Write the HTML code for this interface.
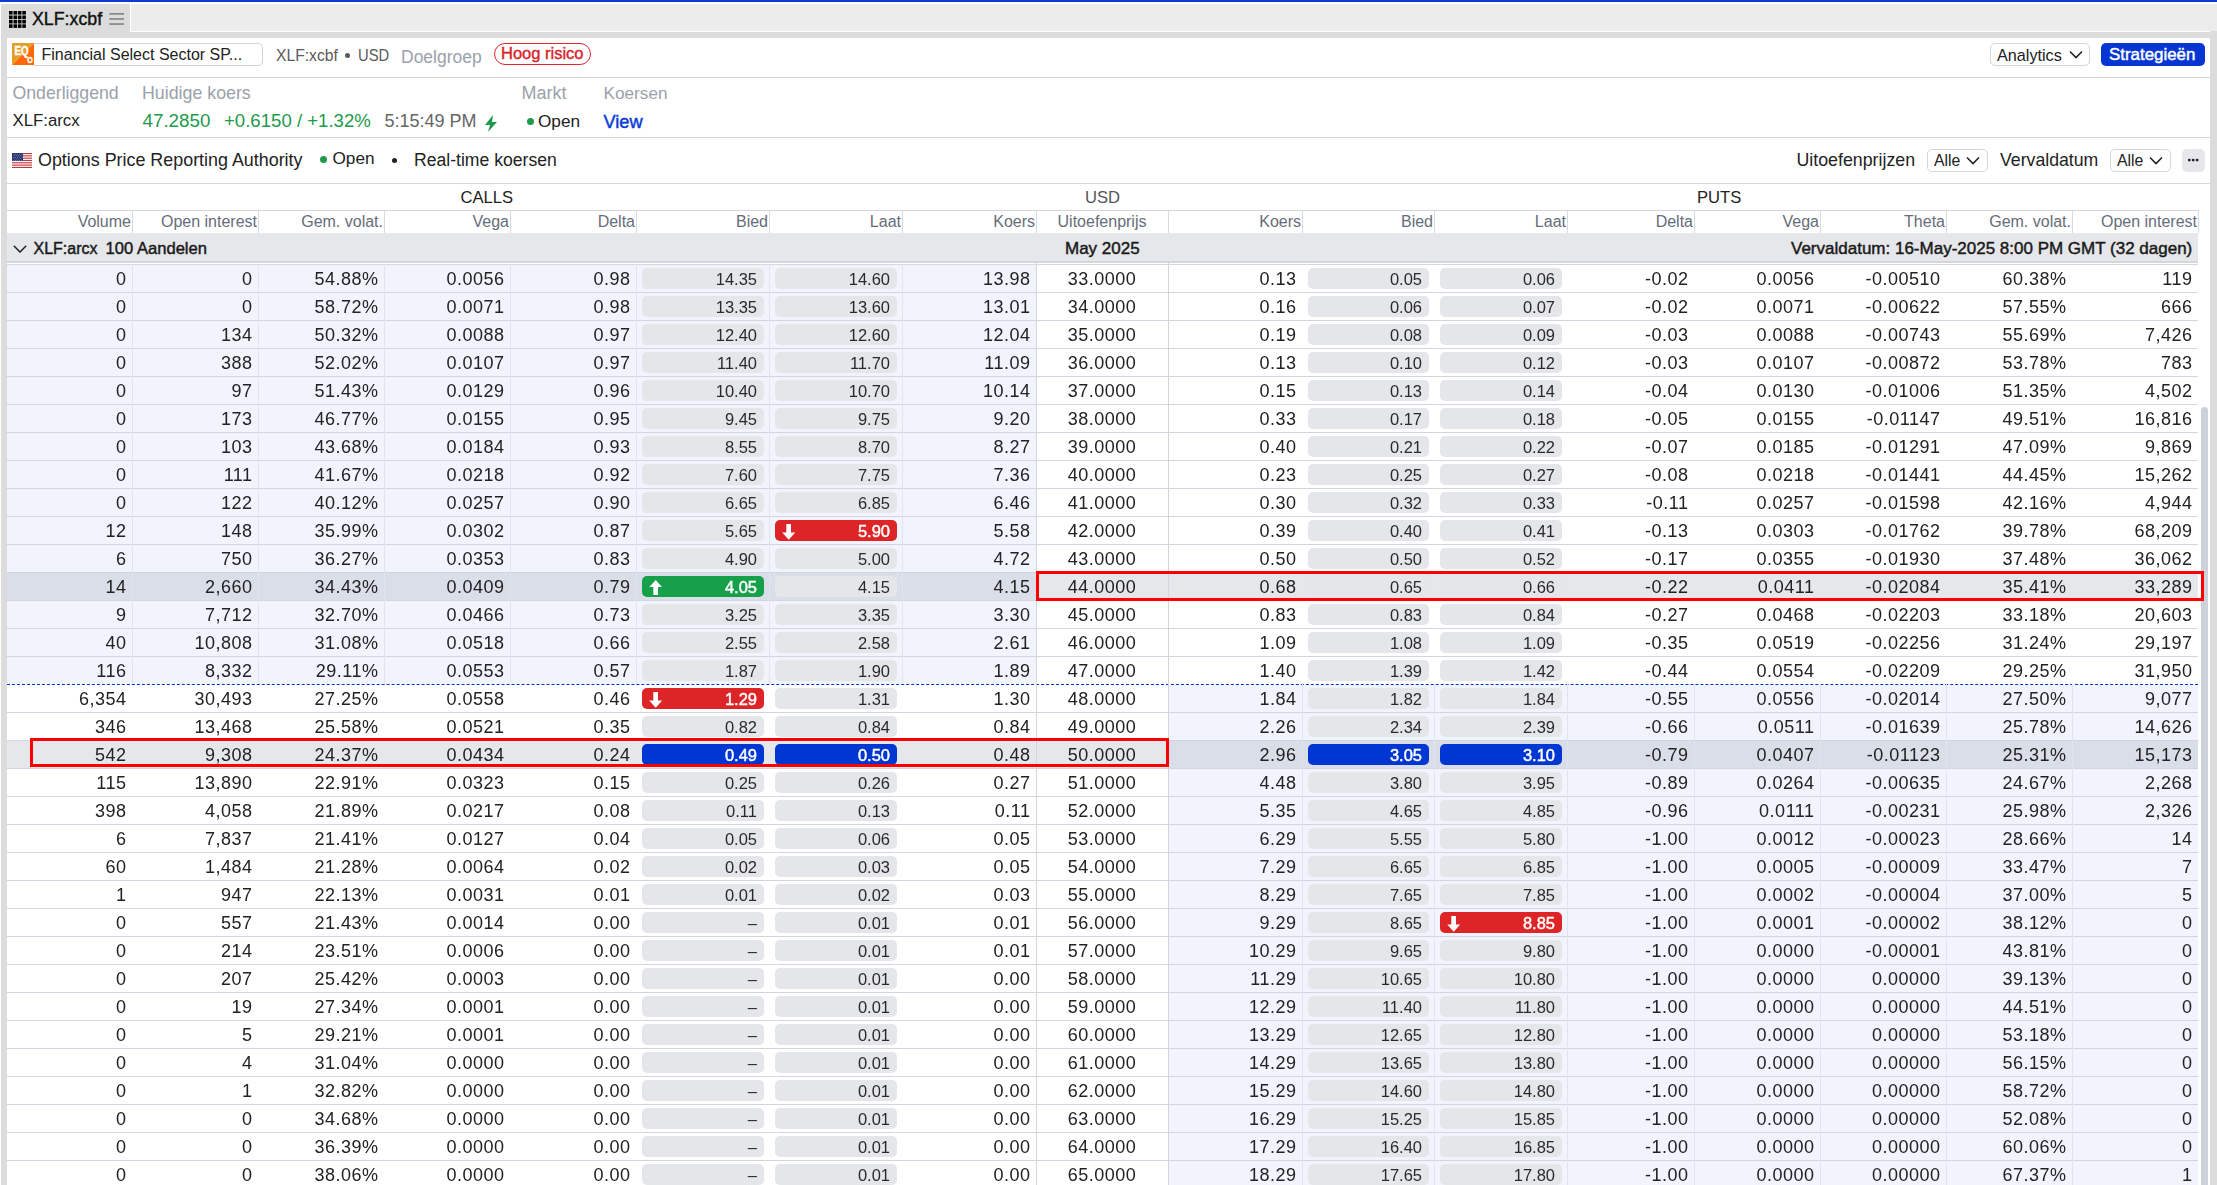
<!DOCTYPE html>
<html><head><meta charset="utf-8">
<style>
html,body{margin:0;padding:0;}
body{width:2217px;height:1185px;overflow:hidden;position:relative;background:#fff;font-family:"Liberation Sans",sans-serif;color:#333;}
.abs{position:absolute;white-space:nowrap;}
#topbar{position:absolute;left:0;top:0;width:2217px;height:2px;background:#0a3bd4;}
#frame{position:absolute;left:1px;top:4px;width:2216px;height:1181px;background:#dcdcdc;}
#tabbar{position:absolute;left:130px;top:4px;width:2087px;height:27px;background:#ececec;border-left:1px solid #fff;border-bottom:1px solid #fff;box-sizing:border-box;height:28px;}
#panel{position:absolute;left:7px;top:38px;width:2203px;height:1147px;background:#fff;}
.hline{position:absolute;left:7px;width:2203px;height:1px;background:#d3d6dd;}
.t{position:absolute;white-space:nowrap;line-height:20px;}
.row{position:absolute;left:0;width:2210px;height:28px;}
.row .bg{position:absolute;top:1px;height:27px;}
.itm{background:#f1f4fd;}
.selb{background:#dadee9;}
.selg{background:#e6e7eb;}
.cell{position:absolute;top:0;height:28px;line-height:31px;font-size:18px;letter-spacing:0.5px;text-align:right;color:#222;white-space:nowrap;}
.ctr{text-align:center!important;}
.pill{position:absolute;top:4px;height:21px;line-height:22px;border-radius:5px;background:#e5e6ea;font-size:16.5px;text-align:right;padding-right:7px;box-sizing:border-box;color:#2a2a2a;white-space:nowrap;}
.pill.red{background:#dd2426;}
.pill.green{background:#17a04a;}
.pill.blue{background:#0036d2;}
.pill.red,.pill.green,.pill.blue{color:#fff;-webkit-text-stroke:0.45px #fff;}
.sb{color:#1a1a1a;-webkit-text-stroke:0.45px #1a1a1a;}
.pill .ar{position:absolute;left:6px;top:3px;}
.sepline{position:absolute;left:7px;width:2191px;height:1px;background:#d2d5dd;}
.vsep{position:absolute;width:1px;background:#dfe4f0;}
.hcell{position:absolute;top:210px;height:23px;line-height:24px;font-size:16px;color:#666d7a;text-align:right;white-space:nowrap;}
.hsep{position:absolute;top:210px;width:1px;height:23px;background:#d9dade;}
</style></head>
<body>
<div id="topbar"></div>
<div id="frame"></div>
<div id="tabbar"></div>
<!-- tab -->
<svg class="abs" style="left:9px;top:11px" width="17" height="17" viewBox="0 0 17 17">
<g fill="#000"><rect x="0" y="0" width="3.6" height="3.6"/><rect x="4.5" y="0" width="3.6" height="3.6"/><rect x="8.9" y="0" width="3.6" height="3.6"/><rect x="13.3" y="0" width="3.6" height="3.6"/>
<rect x="0" y="4.5" width="3.6" height="3.6"/><rect x="4.5" y="4.5" width="3.6" height="3.6"/><rect x="8.9" y="4.5" width="3.6" height="3.6"/><rect x="13.3" y="4.5" width="3.6" height="3.6"/>
<rect x="0" y="8.9" width="3.6" height="3.6"/><rect x="4.5" y="8.9" width="3.6" height="3.6"/><rect x="8.9" y="8.9" width="3.6" height="3.6"/><rect x="13.3" y="8.9" width="3.6" height="3.6"/>
<rect x="0" y="13.3" width="3.6" height="3.6"/><rect x="4.5" y="13.3" width="3.6" height="3.6"/><rect x="8.9" y="13.3" width="3.6" height="3.6"/><rect x="13.3" y="13.3" width="3.6" height="3.6"/></g></svg>
<div class="t" style="left:32px;top:9px;font-size:17.8px;color:#111;-webkit-text-stroke:0.4px #111;">XLF:xcbf</div>
<svg class="abs" style="left:109px;top:12.7px" width="16" height="13" viewBox="0 0 16 13"><g fill="#888"><rect x="0.3" y="0" width="14.7" height="1.7"/><rect x="0.3" y="5.1" width="14.7" height="1.7"/><rect x="0.3" y="10.2" width="14.7" height="1.7"/></g></svg>

<div id="panel"></div>
<!-- row 1 -->
<div class="abs" style="left:33px;top:43px;width:229px;height:21px;border:1px solid #cfd3db;border-left:none;border-radius:0 5px 5px 0;background:#fff;"></div>
<svg class="abs" style="left:12px;top:43px" width="22" height="22" viewBox="0 0 22 22">
<polygon points="0,0 22,0 0,22" fill="#e59f26"/><polygon points="22,0 22,22 0,22" fill="#ff6706"/>
<text x="2.5" y="11.6" font-family="Liberation Sans" font-weight="bold" font-size="12" fill="#fff" stroke="#fff" stroke-width="0.5" textLength="14" lengthAdjust="spacingAndGlyphs">EQ</text>
<text x="15.2" y="19.8" font-family="Liberation Sans" font-weight="bold" font-size="9.6" fill="#fff" stroke="#fff" stroke-width="0.5" textLength="5.6" lengthAdjust="spacingAndGlyphs">O</text></svg>
<div class="t" style="left:41.5px;top:45px;font-size:16px;color:#222;">Financial Select Sector SP...</div>
<div class="t" style="left:275.5px;top:45px;font-size:16.4px;color:#5a5a5a;transform:scaleX(0.955);transform-origin:0 0;">XLF:xcbf</div><div class="abs" style="left:345.3px;top:53.1px;width:5px;height:5px;border-radius:3px;background:#5a5a5a;"></div><div class="t" style="left:358px;top:45px;font-size:16.4px;color:#5a5a5a;transform:scaleX(0.9);transform-origin:0 0;">USD</div>
<div class="t" style="left:401px;top:47px;font-size:17.5px;color:#9ba1ac;">Doelgroep</div>
<div class="abs" style="left:494px;top:43px;width:95px;height:20px;border:1.5px solid #e0242c;border-radius:11px;"></div>
<div class="t" style="left:501px;top:43px;font-size:16.5px;color:#d8232b;-webkit-text-stroke:0.4px #d8232b;">Hoog risico</div>

<div class="abs" style="left:1990px;top:43px;width:98px;height:21px;border:1px solid #d3d6dd;border-radius:5px;"></div>
<div class="t" style="left:1997px;top:45px;font-size:16.2px;color:#222;">Analytics</div>
<svg class="abs" style="left:2069px;top:50px" width="14" height="9" viewBox="0 0 14 9"><path d="M1 1.5l6 6 6-6" fill="none" stroke="#222" stroke-width="1.6"/></svg>
<div class="abs" style="left:2101px;top:43px;width:104px;height:23px;background:#0536d3;border-radius:5px;"></div>
<div class="t" style="left:2109px;top:45px;font-size:16.9px;color:#fff;-webkit-text-stroke:0.45px #fff;">Strategieën</div>

<div class="hline" style="top:77px"></div>
<!-- row 2 -->
<div class="t" style="left:12.5px;top:83px;font-size:17.7px;color:#9ba1ac;">Onderliggend</div>
<div class="t" style="left:142px;top:83px;font-size:17.8px;color:#9ba1ac;">Huidige koers</div>
<div class="t" style="left:521.5px;top:83px;font-size:18px;color:#9ba1ac;">Markt</div>
<div class="t" style="left:603.5px;top:83px;font-size:17.2px;color:#9ba1ac;">Koersen</div>
<div class="t" style="left:12.5px;top:111px;font-size:16.8px;color:#222;">XLF:arcx</div>
<div class="t" style="left:142.5px;top:111px;font-size:18.8px;color:#1d9a4c;">47.2850</div>
<div class="t" style="left:224px;top:111px;font-size:18.6px;color:#1d9a4c;">+0.6150 / +1.32%</div>
<div class="t" style="left:384.5px;top:111px;font-size:18px;color:#666;">5:15:49 PM</div>
<svg class="abs" style="left:484px;top:115px" width="14" height="17" viewBox="0 0 14 17"><path d="M9 0L1 10h5l-2 7 9-10H8z" fill="#1d9a4c"/></svg>
<div class="abs" style="left:526.5px;top:117.5px;width:7.8px;height:7.8px;border-radius:4px;background:#1d9a4c;"></div>
<div class="t" style="left:538px;top:111px;font-size:17.2px;color:#222;">Open</div>
<div class="t" style="left:603.5px;top:112px;font-size:18.2px;color:#0a3bd4;-webkit-text-stroke:0.45px #0a3bd4;">View</div>

<div class="hline" style="top:137px"></div>
<!-- row 3 -->
<svg class="abs" style="left:12px;top:153px" width="20" height="15" viewBox="0 0 20 15">
<rect width="20" height="15" fill="#fff"/>
<g fill="#c0383f"><rect y="0" width="20" height="1.15"/><rect y="2.3" width="20" height="1.15"/><rect y="4.6" width="20" height="1.15"/><rect y="6.9" width="20" height="1.15"/><rect y="9.2" width="20" height="1.15"/><rect y="11.5" width="20" height="1.15"/><rect y="13.85" width="20" height="1.15"/></g>
<rect width="11" height="8" fill="#283470"/><circle cx="1.2" cy="1.1" r="0.45" fill="#c8cde6"/><circle cx="3.4" cy="1.1" r="0.45" fill="#c8cde6"/><circle cx="5.6" cy="1.1" r="0.45" fill="#c8cde6"/><circle cx="7.8" cy="1.1" r="0.45" fill="#c8cde6"/><circle cx="10.0" cy="1.1" r="0.45" fill="#c8cde6"/><circle cx="2.3" cy="2.7" r="0.45" fill="#c8cde6"/><circle cx="4.5" cy="2.7" r="0.45" fill="#c8cde6"/><circle cx="6.7" cy="2.7" r="0.45" fill="#c8cde6"/><circle cx="8.9" cy="2.7" r="0.45" fill="#c8cde6"/><circle cx="1.2" cy="4.3" r="0.45" fill="#c8cde6"/><circle cx="3.4" cy="4.3" r="0.45" fill="#c8cde6"/><circle cx="5.6" cy="4.3" r="0.45" fill="#c8cde6"/><circle cx="7.8" cy="4.3" r="0.45" fill="#c8cde6"/><circle cx="10.0" cy="4.3" r="0.45" fill="#c8cde6"/><circle cx="2.3" cy="5.9" r="0.45" fill="#c8cde6"/><circle cx="4.5" cy="5.9" r="0.45" fill="#c8cde6"/><circle cx="6.7" cy="5.9" r="0.45" fill="#c8cde6"/><circle cx="8.9" cy="5.9" r="0.45" fill="#c8cde6"/><circle cx="1.2" cy="7.5" r="0.45" fill="#c8cde6"/><circle cx="3.4" cy="7.5" r="0.45" fill="#c8cde6"/><circle cx="5.6" cy="7.5" r="0.45" fill="#c8cde6"/><circle cx="7.8" cy="7.5" r="0.45" fill="#c8cde6"/><circle cx="10.0" cy="7.5" r="0.45" fill="#c8cde6"/></svg>
<div class="t" style="left:38px;top:150px;font-size:17.9px;color:#222;">Options Price Reporting Authority</div>
<div class="abs" style="left:319.5px;top:155.5px;width:7.5px;height:7.5px;border-radius:4px;background:#1d9a4c;"></div>
<div class="t" style="left:332.5px;top:148px;font-size:17.2px;color:#222;">Open</div>
<div class="abs" style="left:391.5px;top:157.5px;width:5.5px;height:5.5px;border-radius:3px;background:#222;"></div>
<div class="t" style="left:414px;top:150px;font-size:17.6px;color:#222;">Real-time koersen</div>

<div class="t" style="left:1796.5px;top:150px;font-size:17.8px;color:#222;">Uitoefenprijzen</div>
<div class="abs" style="left:1927px;top:149px;width:59px;height:21px;border:1px solid #d3d6dd;border-radius:5px;"></div>
<div class="t" style="left:1934px;top:151px;font-size:15.8px;color:#222;">Alle</div>
<svg class="abs" style="left:1966px;top:156px" width="14" height="9" viewBox="0 0 14 9"><path d="M1 1.5l6 6 6-6" fill="none" stroke="#222" stroke-width="1.6"/></svg>
<div class="t" style="left:2000px;top:150px;font-size:17.7px;color:#222;">Vervaldatum</div>
<div class="abs" style="left:2110px;top:149px;width:59px;height:21px;border:1px solid #d3d6dd;border-radius:5px;"></div>
<div class="t" style="left:2117px;top:151px;font-size:15.8px;color:#222;">Alle</div>
<svg class="abs" style="left:2149px;top:156px" width="14" height="9" viewBox="0 0 14 9"><path d="M1 1.5l6 6 6-6" fill="none" stroke="#222" stroke-width="1.6"/></svg>
<div class="abs" style="left:2182px;top:149px;width:23px;height:23px;border-radius:5px;background:#e6e7eb;"></div>
<svg class="abs" style="left:2187px;top:157px" width="13" height="6" viewBox="0 0 13 6"><g fill="#222"><circle cx="2.3" cy="3.1" r="1.45"/><circle cx="6.2" cy="3.1" r="1.45"/><circle cx="10.1" cy="3.1" r="1.45"/></g></svg>

<div class="hline" style="top:183px"></div>
<!-- table header -->
<div class="t" style="left:460.5px;top:188px;font-size:16.6px;color:#222;">CALLS</div>
<div class="t" style="left:1085px;top:188px;font-size:16.6px;color:#555;">USD</div>
<div class="t" style="left:1697px;top:188px;font-size:16.6px;color:#222;">PUTS</div>
<div class="hline" style="top:210px;width:2191px;"></div>
<div class="hcell" style="left:7px;width:124px">Volume</div>
<div class="hsep" style="left:132px"></div>
<div class="hcell" style="left:132px;width:125px">Open interest</div>
<div class="hsep" style="left:258px"></div>
<div class="hcell" style="left:258px;width:125px">Gem. volat.</div>
<div class="hsep" style="left:384px"></div>
<div class="hcell" style="left:384px;width:125px">Vega</div>
<div class="hsep" style="left:510px"></div>
<div class="hcell" style="left:510px;width:125px">Delta</div>
<div class="hsep" style="left:636px"></div>
<div class="hcell" style="left:636px;width:132px">Bied</div>
<div class="hsep" style="left:769px"></div>
<div class="hcell" style="left:769px;width:132px">Laat</div>
<div class="hsep" style="left:902px"></div>
<div class="hcell" style="left:902px;width:133px">Koers</div>
<div class="hsep" style="left:1036px"></div>
<div class="hcell ctr" style="left:1036px;width:132px">Uitoefenprijs</div>
<div class="hsep" style="left:1168px"></div>
<div class="hcell" style="left:1168px;width:133px">Koers</div>
<div class="hsep" style="left:1302px"></div>
<div class="hcell" style="left:1302px;width:131px">Bied</div>
<div class="hsep" style="left:1434px"></div>
<div class="hcell" style="left:1434px;width:132px">Laat</div>
<div class="hsep" style="left:1567px"></div>
<div class="hcell" style="left:1567px;width:126px">Delta</div>
<div class="hsep" style="left:1694px"></div>
<div class="hcell" style="left:1694px;width:125px">Vega</div>
<div class="hsep" style="left:1820px"></div>
<div class="hcell" style="left:1820px;width:125px">Theta</div>
<div class="hsep" style="left:1946px"></div>
<div class="hcell" style="left:1946px;width:125px">Gem. volat.</div>
<div class="hsep" style="left:2072px"></div>
<div class="hcell" style="left:2072px;width:125px">Open interest</div>
<div class="hsep" style="left:2198px"></div>
<div class="hline" style="top:233px;width:2191px;"></div>
<div class="abs" style="left:7px;top:233px;width:2191px;height:28px;background:#e6e7eb;"></div>
<svg class="abs" style="left:12.5px;top:244.5px" width="14" height="8" viewBox="0 0 14 8"><path d="M0.8 0.8l6.2 6.2 6.2-6.2" fill="none" stroke="#222" stroke-width="1.5"/></svg>
<div class="t sb" style="left:33.5px;top:239px;font-size:16px;">XLF:arcx</div><div class="t sb" style="left:105.5px;top:239px;font-size:16.6px;">100 Aandelen</div>
<div class="t sb" style="left:1065px;top:239px;font-size:17px;">May 2025</div>
<div class="t sb" style="left:1791px;top:239px;font-size:17px;">Vervaldatum: 16-May-2025 8:00 PM GMT (32 dagen)</div>
<div class="abs" style="left:7px;top:261px;width:2191px;height:1.5px;background:#d3d6dd;"></div>
<div class="abs" style="left:7px;top:264px;width:2191px;height:1px;background:#d5d8df;"></div>

<div style="position:absolute;left:0;top:0;width:2217px;height:1185px;will-change:transform;">
<div class="row" style="top:264px">
<div class="bg itm" style="left:7px;width:1029px"></div>
<div class="cell" style="left:7px;width:119.5px">0</div>
<div class="cell" style="left:132px;width:120.5px">0</div>
<div class="cell" style="left:258px;width:120.5px">54.88%</div>
<div class="cell" style="left:384px;width:120.5px">0.0056</div>
<div class="cell" style="left:510px;width:120.5px">0.98</div>
<div class="pill" style="left:642px;width:122px">14.35</div>
<div class="pill" style="left:775px;width:122px">14.60</div>
<div class="cell" style="left:902px;width:128.5px">13.98</div>
<div class="cell ctr" style="left:1036px;width:132px">33.0000</div>
<div class="cell" style="left:1168px;width:128.5px">0.13</div>
<div class="pill" style="left:1308px;width:121px">0.05</div>
<div class="pill" style="left:1440px;width:122px">0.06</div>
<div class="cell" style="left:1567px;width:121.5px">-0.02</div>
<div class="cell" style="left:1694px;width:120.5px">0.0056</div>
<div class="cell" style="left:1820px;width:120.5px">-0.00510</div>
<div class="cell" style="left:1946px;width:120.5px">60.38%</div>
<div class="cell" style="left:2072px;width:120.5px">119</div>
</div>
<div class="row" style="top:292px">
<div class="bg itm" style="left:7px;width:1029px"></div>
<div class="cell" style="left:7px;width:119.5px">0</div>
<div class="cell" style="left:132px;width:120.5px">0</div>
<div class="cell" style="left:258px;width:120.5px">58.72%</div>
<div class="cell" style="left:384px;width:120.5px">0.0071</div>
<div class="cell" style="left:510px;width:120.5px">0.98</div>
<div class="pill" style="left:642px;width:122px">13.35</div>
<div class="pill" style="left:775px;width:122px">13.60</div>
<div class="cell" style="left:902px;width:128.5px">13.01</div>
<div class="cell ctr" style="left:1036px;width:132px">34.0000</div>
<div class="cell" style="left:1168px;width:128.5px">0.16</div>
<div class="pill" style="left:1308px;width:121px">0.06</div>
<div class="pill" style="left:1440px;width:122px">0.07</div>
<div class="cell" style="left:1567px;width:121.5px">-0.02</div>
<div class="cell" style="left:1694px;width:120.5px">0.0071</div>
<div class="cell" style="left:1820px;width:120.5px">-0.00622</div>
<div class="cell" style="left:1946px;width:120.5px">57.55%</div>
<div class="cell" style="left:2072px;width:120.5px">666</div>
</div>
<div class="row" style="top:320px">
<div class="bg itm" style="left:7px;width:1029px"></div>
<div class="cell" style="left:7px;width:119.5px">0</div>
<div class="cell" style="left:132px;width:120.5px">134</div>
<div class="cell" style="left:258px;width:120.5px">50.32%</div>
<div class="cell" style="left:384px;width:120.5px">0.0088</div>
<div class="cell" style="left:510px;width:120.5px">0.97</div>
<div class="pill" style="left:642px;width:122px">12.40</div>
<div class="pill" style="left:775px;width:122px">12.60</div>
<div class="cell" style="left:902px;width:128.5px">12.04</div>
<div class="cell ctr" style="left:1036px;width:132px">35.0000</div>
<div class="cell" style="left:1168px;width:128.5px">0.19</div>
<div class="pill" style="left:1308px;width:121px">0.08</div>
<div class="pill" style="left:1440px;width:122px">0.09</div>
<div class="cell" style="left:1567px;width:121.5px">-0.03</div>
<div class="cell" style="left:1694px;width:120.5px">0.0088</div>
<div class="cell" style="left:1820px;width:120.5px">-0.00743</div>
<div class="cell" style="left:1946px;width:120.5px">55.69%</div>
<div class="cell" style="left:2072px;width:120.5px">7,426</div>
</div>
<div class="row" style="top:348px">
<div class="bg itm" style="left:7px;width:1029px"></div>
<div class="cell" style="left:7px;width:119.5px">0</div>
<div class="cell" style="left:132px;width:120.5px">388</div>
<div class="cell" style="left:258px;width:120.5px">52.02%</div>
<div class="cell" style="left:384px;width:120.5px">0.0107</div>
<div class="cell" style="left:510px;width:120.5px">0.97</div>
<div class="pill" style="left:642px;width:122px">11.40</div>
<div class="pill" style="left:775px;width:122px">11.70</div>
<div class="cell" style="left:902px;width:128.5px">11.09</div>
<div class="cell ctr" style="left:1036px;width:132px">36.0000</div>
<div class="cell" style="left:1168px;width:128.5px">0.13</div>
<div class="pill" style="left:1308px;width:121px">0.10</div>
<div class="pill" style="left:1440px;width:122px">0.12</div>
<div class="cell" style="left:1567px;width:121.5px">-0.03</div>
<div class="cell" style="left:1694px;width:120.5px">0.0107</div>
<div class="cell" style="left:1820px;width:120.5px">-0.00872</div>
<div class="cell" style="left:1946px;width:120.5px">53.78%</div>
<div class="cell" style="left:2072px;width:120.5px">783</div>
</div>
<div class="row" style="top:376px">
<div class="bg itm" style="left:7px;width:1029px"></div>
<div class="cell" style="left:7px;width:119.5px">0</div>
<div class="cell" style="left:132px;width:120.5px">97</div>
<div class="cell" style="left:258px;width:120.5px">51.43%</div>
<div class="cell" style="left:384px;width:120.5px">0.0129</div>
<div class="cell" style="left:510px;width:120.5px">0.96</div>
<div class="pill" style="left:642px;width:122px">10.40</div>
<div class="pill" style="left:775px;width:122px">10.70</div>
<div class="cell" style="left:902px;width:128.5px">10.14</div>
<div class="cell ctr" style="left:1036px;width:132px">37.0000</div>
<div class="cell" style="left:1168px;width:128.5px">0.15</div>
<div class="pill" style="left:1308px;width:121px">0.13</div>
<div class="pill" style="left:1440px;width:122px">0.14</div>
<div class="cell" style="left:1567px;width:121.5px">-0.04</div>
<div class="cell" style="left:1694px;width:120.5px">0.0130</div>
<div class="cell" style="left:1820px;width:120.5px">-0.01006</div>
<div class="cell" style="left:1946px;width:120.5px">51.35%</div>
<div class="cell" style="left:2072px;width:120.5px">4,502</div>
</div>
<div class="row" style="top:404px">
<div class="bg itm" style="left:7px;width:1029px"></div>
<div class="cell" style="left:7px;width:119.5px">0</div>
<div class="cell" style="left:132px;width:120.5px">173</div>
<div class="cell" style="left:258px;width:120.5px">46.77%</div>
<div class="cell" style="left:384px;width:120.5px">0.0155</div>
<div class="cell" style="left:510px;width:120.5px">0.95</div>
<div class="pill" style="left:642px;width:122px">9.45</div>
<div class="pill" style="left:775px;width:122px">9.75</div>
<div class="cell" style="left:902px;width:128.5px">9.20</div>
<div class="cell ctr" style="left:1036px;width:132px">38.0000</div>
<div class="cell" style="left:1168px;width:128.5px">0.33</div>
<div class="pill" style="left:1308px;width:121px">0.17</div>
<div class="pill" style="left:1440px;width:122px">0.18</div>
<div class="cell" style="left:1567px;width:121.5px">-0.05</div>
<div class="cell" style="left:1694px;width:120.5px">0.0155</div>
<div class="cell" style="left:1820px;width:120.5px">-0.01147</div>
<div class="cell" style="left:1946px;width:120.5px">49.51%</div>
<div class="cell" style="left:2072px;width:120.5px">16,816</div>
</div>
<div class="row" style="top:432px">
<div class="bg itm" style="left:7px;width:1029px"></div>
<div class="cell" style="left:7px;width:119.5px">0</div>
<div class="cell" style="left:132px;width:120.5px">103</div>
<div class="cell" style="left:258px;width:120.5px">43.68%</div>
<div class="cell" style="left:384px;width:120.5px">0.0184</div>
<div class="cell" style="left:510px;width:120.5px">0.93</div>
<div class="pill" style="left:642px;width:122px">8.55</div>
<div class="pill" style="left:775px;width:122px">8.70</div>
<div class="cell" style="left:902px;width:128.5px">8.27</div>
<div class="cell ctr" style="left:1036px;width:132px">39.0000</div>
<div class="cell" style="left:1168px;width:128.5px">0.40</div>
<div class="pill" style="left:1308px;width:121px">0.21</div>
<div class="pill" style="left:1440px;width:122px">0.22</div>
<div class="cell" style="left:1567px;width:121.5px">-0.07</div>
<div class="cell" style="left:1694px;width:120.5px">0.0185</div>
<div class="cell" style="left:1820px;width:120.5px">-0.01291</div>
<div class="cell" style="left:1946px;width:120.5px">47.09%</div>
<div class="cell" style="left:2072px;width:120.5px">9,869</div>
</div>
<div class="row" style="top:460px">
<div class="bg itm" style="left:7px;width:1029px"></div>
<div class="cell" style="left:7px;width:119.5px">0</div>
<div class="cell" style="left:132px;width:120.5px">111</div>
<div class="cell" style="left:258px;width:120.5px">41.67%</div>
<div class="cell" style="left:384px;width:120.5px">0.0218</div>
<div class="cell" style="left:510px;width:120.5px">0.92</div>
<div class="pill" style="left:642px;width:122px">7.60</div>
<div class="pill" style="left:775px;width:122px">7.75</div>
<div class="cell" style="left:902px;width:128.5px">7.36</div>
<div class="cell ctr" style="left:1036px;width:132px">40.0000</div>
<div class="cell" style="left:1168px;width:128.5px">0.23</div>
<div class="pill" style="left:1308px;width:121px">0.25</div>
<div class="pill" style="left:1440px;width:122px">0.27</div>
<div class="cell" style="left:1567px;width:121.5px">-0.08</div>
<div class="cell" style="left:1694px;width:120.5px">0.0218</div>
<div class="cell" style="left:1820px;width:120.5px">-0.01441</div>
<div class="cell" style="left:1946px;width:120.5px">44.45%</div>
<div class="cell" style="left:2072px;width:120.5px">15,262</div>
</div>
<div class="row" style="top:488px">
<div class="bg itm" style="left:7px;width:1029px"></div>
<div class="cell" style="left:7px;width:119.5px">0</div>
<div class="cell" style="left:132px;width:120.5px">122</div>
<div class="cell" style="left:258px;width:120.5px">40.12%</div>
<div class="cell" style="left:384px;width:120.5px">0.0257</div>
<div class="cell" style="left:510px;width:120.5px">0.90</div>
<div class="pill" style="left:642px;width:122px">6.65</div>
<div class="pill" style="left:775px;width:122px">6.85</div>
<div class="cell" style="left:902px;width:128.5px">6.46</div>
<div class="cell ctr" style="left:1036px;width:132px">41.0000</div>
<div class="cell" style="left:1168px;width:128.5px">0.30</div>
<div class="pill" style="left:1308px;width:121px">0.32</div>
<div class="pill" style="left:1440px;width:122px">0.33</div>
<div class="cell" style="left:1567px;width:121.5px">-0.11</div>
<div class="cell" style="left:1694px;width:120.5px">0.0257</div>
<div class="cell" style="left:1820px;width:120.5px">-0.01598</div>
<div class="cell" style="left:1946px;width:120.5px">42.16%</div>
<div class="cell" style="left:2072px;width:120.5px">4,944</div>
</div>
<div class="row" style="top:516px">
<div class="bg itm" style="left:7px;width:1029px"></div>
<div class="cell" style="left:7px;width:119.5px">12</div>
<div class="cell" style="left:132px;width:120.5px">148</div>
<div class="cell" style="left:258px;width:120.5px">35.99%</div>
<div class="cell" style="left:384px;width:120.5px">0.0302</div>
<div class="cell" style="left:510px;width:120.5px">0.87</div>
<div class="pill" style="left:642px;width:122px">5.65</div>
<div class="pill red" style="left:775px;width:122px"><svg class="ar" width="15" height="18" viewBox="0 0 15 18"><path d="M5.3 1H10V9.5H14.2L7.7 16.8L1.2 9.5H5.3Z" fill="#fff"/></svg>5.90</div>
<div class="cell" style="left:902px;width:128.5px">5.58</div>
<div class="cell ctr" style="left:1036px;width:132px">42.0000</div>
<div class="cell" style="left:1168px;width:128.5px">0.39</div>
<div class="pill" style="left:1308px;width:121px">0.40</div>
<div class="pill" style="left:1440px;width:122px">0.41</div>
<div class="cell" style="left:1567px;width:121.5px">-0.13</div>
<div class="cell" style="left:1694px;width:120.5px">0.0303</div>
<div class="cell" style="left:1820px;width:120.5px">-0.01762</div>
<div class="cell" style="left:1946px;width:120.5px">39.78%</div>
<div class="cell" style="left:2072px;width:120.5px">68,209</div>
</div>
<div class="row" style="top:544px">
<div class="bg itm" style="left:7px;width:1029px"></div>
<div class="cell" style="left:7px;width:119.5px">6</div>
<div class="cell" style="left:132px;width:120.5px">750</div>
<div class="cell" style="left:258px;width:120.5px">36.27%</div>
<div class="cell" style="left:384px;width:120.5px">0.0353</div>
<div class="cell" style="left:510px;width:120.5px">0.83</div>
<div class="pill" style="left:642px;width:122px">4.90</div>
<div class="pill" style="left:775px;width:122px">5.00</div>
<div class="cell" style="left:902px;width:128.5px">4.72</div>
<div class="cell ctr" style="left:1036px;width:132px">43.0000</div>
<div class="cell" style="left:1168px;width:128.5px">0.50</div>
<div class="pill" style="left:1308px;width:121px">0.50</div>
<div class="pill" style="left:1440px;width:122px">0.52</div>
<div class="cell" style="left:1567px;width:121.5px">-0.17</div>
<div class="cell" style="left:1694px;width:120.5px">0.0355</div>
<div class="cell" style="left:1820px;width:120.5px">-0.01930</div>
<div class="cell" style="left:1946px;width:120.5px">37.48%</div>
<div class="cell" style="left:2072px;width:120.5px">36,062</div>
</div>
<div class="row" style="top:572px">
<div class="bg selb" style="left:7px;width:1029px"></div>
<div class="bg selg" style="left:1036px;width:1162px"></div>
<div class="cell" style="left:7px;width:119.5px">14</div>
<div class="cell" style="left:132px;width:120.5px">2,660</div>
<div class="cell" style="left:258px;width:120.5px">34.43%</div>
<div class="cell" style="left:384px;width:120.5px">0.0409</div>
<div class="cell" style="left:510px;width:120.5px">0.79</div>
<div class="pill green" style="left:642px;width:122px"><svg class="ar" width="15" height="18" viewBox="0 0 15 18"><path d="M5.3 16H10V8H14L7.7 1L1.4 8H5.3Z" fill="#fff"/></svg>4.05</div>
<div class="pill" style="left:775px;width:122px">4.15</div>
<div class="cell" style="left:902px;width:128.5px">4.15</div>
<div class="cell ctr" style="left:1036px;width:132px">44.0000</div>
<div class="cell" style="left:1168px;width:128.5px">0.68</div>
<div class="pill" style="left:1308px;width:121px">0.65</div>
<div class="pill" style="left:1440px;width:122px">0.66</div>
<div class="cell" style="left:1567px;width:121.5px">-0.22</div>
<div class="cell" style="left:1694px;width:120.5px">0.0411</div>
<div class="cell" style="left:1820px;width:120.5px">-0.02084</div>
<div class="cell" style="left:1946px;width:120.5px">35.41%</div>
<div class="cell" style="left:2072px;width:120.5px">33,289</div>
</div>
<div class="row" style="top:600px">
<div class="bg itm" style="left:7px;width:1029px"></div>
<div class="cell" style="left:7px;width:119.5px">9</div>
<div class="cell" style="left:132px;width:120.5px">7,712</div>
<div class="cell" style="left:258px;width:120.5px">32.70%</div>
<div class="cell" style="left:384px;width:120.5px">0.0466</div>
<div class="cell" style="left:510px;width:120.5px">0.73</div>
<div class="pill" style="left:642px;width:122px">3.25</div>
<div class="pill" style="left:775px;width:122px">3.35</div>
<div class="cell" style="left:902px;width:128.5px">3.30</div>
<div class="cell ctr" style="left:1036px;width:132px">45.0000</div>
<div class="cell" style="left:1168px;width:128.5px">0.83</div>
<div class="pill" style="left:1308px;width:121px">0.83</div>
<div class="pill" style="left:1440px;width:122px">0.84</div>
<div class="cell" style="left:1567px;width:121.5px">-0.27</div>
<div class="cell" style="left:1694px;width:120.5px">0.0468</div>
<div class="cell" style="left:1820px;width:120.5px">-0.02203</div>
<div class="cell" style="left:1946px;width:120.5px">33.18%</div>
<div class="cell" style="left:2072px;width:120.5px">20,603</div>
</div>
<div class="row" style="top:628px">
<div class="bg itm" style="left:7px;width:1029px"></div>
<div class="cell" style="left:7px;width:119.5px">40</div>
<div class="cell" style="left:132px;width:120.5px">10,808</div>
<div class="cell" style="left:258px;width:120.5px">31.08%</div>
<div class="cell" style="left:384px;width:120.5px">0.0518</div>
<div class="cell" style="left:510px;width:120.5px">0.66</div>
<div class="pill" style="left:642px;width:122px">2.55</div>
<div class="pill" style="left:775px;width:122px">2.58</div>
<div class="cell" style="left:902px;width:128.5px">2.61</div>
<div class="cell ctr" style="left:1036px;width:132px">46.0000</div>
<div class="cell" style="left:1168px;width:128.5px">1.09</div>
<div class="pill" style="left:1308px;width:121px">1.08</div>
<div class="pill" style="left:1440px;width:122px">1.09</div>
<div class="cell" style="left:1567px;width:121.5px">-0.35</div>
<div class="cell" style="left:1694px;width:120.5px">0.0519</div>
<div class="cell" style="left:1820px;width:120.5px">-0.02256</div>
<div class="cell" style="left:1946px;width:120.5px">31.24%</div>
<div class="cell" style="left:2072px;width:120.5px">29,197</div>
</div>
<div class="row" style="top:656px">
<div class="bg itm" style="left:7px;width:1029px"></div>
<div class="cell" style="left:7px;width:119.5px">116</div>
<div class="cell" style="left:132px;width:120.5px">8,332</div>
<div class="cell" style="left:258px;width:120.5px">29.11%</div>
<div class="cell" style="left:384px;width:120.5px">0.0553</div>
<div class="cell" style="left:510px;width:120.5px">0.57</div>
<div class="pill" style="left:642px;width:122px">1.87</div>
<div class="pill" style="left:775px;width:122px">1.90</div>
<div class="cell" style="left:902px;width:128.5px">1.89</div>
<div class="cell ctr" style="left:1036px;width:132px">47.0000</div>
<div class="cell" style="left:1168px;width:128.5px">1.40</div>
<div class="pill" style="left:1308px;width:121px">1.39</div>
<div class="pill" style="left:1440px;width:122px">1.42</div>
<div class="cell" style="left:1567px;width:121.5px">-0.44</div>
<div class="cell" style="left:1694px;width:120.5px">0.0554</div>
<div class="cell" style="left:1820px;width:120.5px">-0.02209</div>
<div class="cell" style="left:1946px;width:120.5px">29.25%</div>
<div class="cell" style="left:2072px;width:120.5px">31,950</div>
</div>
<div class="row" style="top:684px">
<div class="bg itm" style="left:1168px;width:1030px"></div>
<div class="cell" style="left:7px;width:119.5px">6,354</div>
<div class="cell" style="left:132px;width:120.5px">30,493</div>
<div class="cell" style="left:258px;width:120.5px">27.25%</div>
<div class="cell" style="left:384px;width:120.5px">0.0558</div>
<div class="cell" style="left:510px;width:120.5px">0.46</div>
<div class="pill red" style="left:642px;width:122px"><svg class="ar" width="15" height="18" viewBox="0 0 15 18"><path d="M5.3 1H10V9.5H14.2L7.7 16.8L1.2 9.5H5.3Z" fill="#fff"/></svg>1.29</div>
<div class="pill" style="left:775px;width:122px">1.31</div>
<div class="cell" style="left:902px;width:128.5px">1.30</div>
<div class="cell ctr" style="left:1036px;width:132px">48.0000</div>
<div class="cell" style="left:1168px;width:128.5px">1.84</div>
<div class="pill" style="left:1308px;width:121px">1.82</div>
<div class="pill" style="left:1440px;width:122px">1.84</div>
<div class="cell" style="left:1567px;width:121.5px">-0.55</div>
<div class="cell" style="left:1694px;width:120.5px">0.0556</div>
<div class="cell" style="left:1820px;width:120.5px">-0.02014</div>
<div class="cell" style="left:1946px;width:120.5px">27.50%</div>
<div class="cell" style="left:2072px;width:120.5px">9,077</div>
</div>
<div class="row" style="top:712px">
<div class="bg itm" style="left:1168px;width:1030px"></div>
<div class="cell" style="left:7px;width:119.5px">346</div>
<div class="cell" style="left:132px;width:120.5px">13,468</div>
<div class="cell" style="left:258px;width:120.5px">25.58%</div>
<div class="cell" style="left:384px;width:120.5px">0.0521</div>
<div class="cell" style="left:510px;width:120.5px">0.35</div>
<div class="pill" style="left:642px;width:122px">0.82</div>
<div class="pill" style="left:775px;width:122px">0.84</div>
<div class="cell" style="left:902px;width:128.5px">0.84</div>
<div class="cell ctr" style="left:1036px;width:132px">49.0000</div>
<div class="cell" style="left:1168px;width:128.5px">2.26</div>
<div class="pill" style="left:1308px;width:121px">2.34</div>
<div class="pill" style="left:1440px;width:122px">2.39</div>
<div class="cell" style="left:1567px;width:121.5px">-0.66</div>
<div class="cell" style="left:1694px;width:120.5px">0.0511</div>
<div class="cell" style="left:1820px;width:120.5px">-0.01639</div>
<div class="cell" style="left:1946px;width:120.5px">25.78%</div>
<div class="cell" style="left:2072px;width:120.5px">14,626</div>
</div>
<div class="row" style="top:740px">
<div class="bg selg" style="left:7px;width:1161px"></div>
<div class="bg selb" style="left:1168px;width:1030px"></div>
<div class="cell" style="left:7px;width:119.5px">542</div>
<div class="cell" style="left:132px;width:120.5px">9,308</div>
<div class="cell" style="left:258px;width:120.5px">24.37%</div>
<div class="cell" style="left:384px;width:120.5px">0.0434</div>
<div class="cell" style="left:510px;width:120.5px">0.24</div>
<div class="pill blue" style="left:642px;width:122px">0.49</div>
<div class="pill blue" style="left:775px;width:122px">0.50</div>
<div class="cell" style="left:902px;width:128.5px">0.48</div>
<div class="cell ctr" style="left:1036px;width:132px">50.0000</div>
<div class="cell" style="left:1168px;width:128.5px">2.96</div>
<div class="pill blue" style="left:1308px;width:121px">3.05</div>
<div class="pill blue" style="left:1440px;width:122px">3.10</div>
<div class="cell" style="left:1567px;width:121.5px">-0.79</div>
<div class="cell" style="left:1694px;width:120.5px">0.0407</div>
<div class="cell" style="left:1820px;width:120.5px">-0.01123</div>
<div class="cell" style="left:1946px;width:120.5px">25.31%</div>
<div class="cell" style="left:2072px;width:120.5px">15,173</div>
</div>
<div class="row" style="top:768px">
<div class="bg itm" style="left:1168px;width:1030px"></div>
<div class="cell" style="left:7px;width:119.5px">115</div>
<div class="cell" style="left:132px;width:120.5px">13,890</div>
<div class="cell" style="left:258px;width:120.5px">22.91%</div>
<div class="cell" style="left:384px;width:120.5px">0.0323</div>
<div class="cell" style="left:510px;width:120.5px">0.15</div>
<div class="pill" style="left:642px;width:122px">0.25</div>
<div class="pill" style="left:775px;width:122px">0.26</div>
<div class="cell" style="left:902px;width:128.5px">0.27</div>
<div class="cell ctr" style="left:1036px;width:132px">51.0000</div>
<div class="cell" style="left:1168px;width:128.5px">4.48</div>
<div class="pill" style="left:1308px;width:121px">3.80</div>
<div class="pill" style="left:1440px;width:122px">3.95</div>
<div class="cell" style="left:1567px;width:121.5px">-0.89</div>
<div class="cell" style="left:1694px;width:120.5px">0.0264</div>
<div class="cell" style="left:1820px;width:120.5px">-0.00635</div>
<div class="cell" style="left:1946px;width:120.5px">24.67%</div>
<div class="cell" style="left:2072px;width:120.5px">2,268</div>
</div>
<div class="row" style="top:796px">
<div class="bg itm" style="left:1168px;width:1030px"></div>
<div class="cell" style="left:7px;width:119.5px">398</div>
<div class="cell" style="left:132px;width:120.5px">4,058</div>
<div class="cell" style="left:258px;width:120.5px">21.89%</div>
<div class="cell" style="left:384px;width:120.5px">0.0217</div>
<div class="cell" style="left:510px;width:120.5px">0.08</div>
<div class="pill" style="left:642px;width:122px">0.11</div>
<div class="pill" style="left:775px;width:122px">0.13</div>
<div class="cell" style="left:902px;width:128.5px">0.11</div>
<div class="cell ctr" style="left:1036px;width:132px">52.0000</div>
<div class="cell" style="left:1168px;width:128.5px">5.35</div>
<div class="pill" style="left:1308px;width:121px">4.65</div>
<div class="pill" style="left:1440px;width:122px">4.85</div>
<div class="cell" style="left:1567px;width:121.5px">-0.96</div>
<div class="cell" style="left:1694px;width:120.5px">0.0111</div>
<div class="cell" style="left:1820px;width:120.5px">-0.00231</div>
<div class="cell" style="left:1946px;width:120.5px">25.98%</div>
<div class="cell" style="left:2072px;width:120.5px">2,326</div>
</div>
<div class="row" style="top:824px">
<div class="bg itm" style="left:1168px;width:1030px"></div>
<div class="cell" style="left:7px;width:119.5px">6</div>
<div class="cell" style="left:132px;width:120.5px">7,837</div>
<div class="cell" style="left:258px;width:120.5px">21.41%</div>
<div class="cell" style="left:384px;width:120.5px">0.0127</div>
<div class="cell" style="left:510px;width:120.5px">0.04</div>
<div class="pill" style="left:642px;width:122px">0.05</div>
<div class="pill" style="left:775px;width:122px">0.06</div>
<div class="cell" style="left:902px;width:128.5px">0.05</div>
<div class="cell ctr" style="left:1036px;width:132px">53.0000</div>
<div class="cell" style="left:1168px;width:128.5px">6.29</div>
<div class="pill" style="left:1308px;width:121px">5.55</div>
<div class="pill" style="left:1440px;width:122px">5.80</div>
<div class="cell" style="left:1567px;width:121.5px">-1.00</div>
<div class="cell" style="left:1694px;width:120.5px">0.0012</div>
<div class="cell" style="left:1820px;width:120.5px">-0.00023</div>
<div class="cell" style="left:1946px;width:120.5px">28.66%</div>
<div class="cell" style="left:2072px;width:120.5px">14</div>
</div>
<div class="row" style="top:852px">
<div class="bg itm" style="left:1168px;width:1030px"></div>
<div class="cell" style="left:7px;width:119.5px">60</div>
<div class="cell" style="left:132px;width:120.5px">1,484</div>
<div class="cell" style="left:258px;width:120.5px">21.28%</div>
<div class="cell" style="left:384px;width:120.5px">0.0064</div>
<div class="cell" style="left:510px;width:120.5px">0.02</div>
<div class="pill" style="left:642px;width:122px">0.02</div>
<div class="pill" style="left:775px;width:122px">0.03</div>
<div class="cell" style="left:902px;width:128.5px">0.05</div>
<div class="cell ctr" style="left:1036px;width:132px">54.0000</div>
<div class="cell" style="left:1168px;width:128.5px">7.29</div>
<div class="pill" style="left:1308px;width:121px">6.65</div>
<div class="pill" style="left:1440px;width:122px">6.85</div>
<div class="cell" style="left:1567px;width:121.5px">-1.00</div>
<div class="cell" style="left:1694px;width:120.5px">0.0005</div>
<div class="cell" style="left:1820px;width:120.5px">-0.00009</div>
<div class="cell" style="left:1946px;width:120.5px">33.47%</div>
<div class="cell" style="left:2072px;width:120.5px">7</div>
</div>
<div class="row" style="top:880px">
<div class="bg itm" style="left:1168px;width:1030px"></div>
<div class="cell" style="left:7px;width:119.5px">1</div>
<div class="cell" style="left:132px;width:120.5px">947</div>
<div class="cell" style="left:258px;width:120.5px">22.13%</div>
<div class="cell" style="left:384px;width:120.5px">0.0031</div>
<div class="cell" style="left:510px;width:120.5px">0.01</div>
<div class="pill" style="left:642px;width:122px">0.01</div>
<div class="pill" style="left:775px;width:122px">0.02</div>
<div class="cell" style="left:902px;width:128.5px">0.03</div>
<div class="cell ctr" style="left:1036px;width:132px">55.0000</div>
<div class="cell" style="left:1168px;width:128.5px">8.29</div>
<div class="pill" style="left:1308px;width:121px">7.65</div>
<div class="pill" style="left:1440px;width:122px">7.85</div>
<div class="cell" style="left:1567px;width:121.5px">-1.00</div>
<div class="cell" style="left:1694px;width:120.5px">0.0002</div>
<div class="cell" style="left:1820px;width:120.5px">-0.00004</div>
<div class="cell" style="left:1946px;width:120.5px">37.00%</div>
<div class="cell" style="left:2072px;width:120.5px">5</div>
</div>
<div class="row" style="top:908px">
<div class="bg itm" style="left:1168px;width:1030px"></div>
<div class="cell" style="left:7px;width:119.5px">0</div>
<div class="cell" style="left:132px;width:120.5px">557</div>
<div class="cell" style="left:258px;width:120.5px">21.43%</div>
<div class="cell" style="left:384px;width:120.5px">0.0014</div>
<div class="cell" style="left:510px;width:120.5px">0.00</div>
<div class="pill" style="left:642px;width:122px">–</div>
<div class="pill" style="left:775px;width:122px">0.01</div>
<div class="cell" style="left:902px;width:128.5px">0.01</div>
<div class="cell ctr" style="left:1036px;width:132px">56.0000</div>
<div class="cell" style="left:1168px;width:128.5px">9.29</div>
<div class="pill" style="left:1308px;width:121px">8.65</div>
<div class="pill red" style="left:1440px;width:122px"><svg class="ar" width="15" height="18" viewBox="0 0 15 18"><path d="M5.3 1H10V9.5H14.2L7.7 16.8L1.2 9.5H5.3Z" fill="#fff"/></svg>8.85</div>
<div class="cell" style="left:1567px;width:121.5px">-1.00</div>
<div class="cell" style="left:1694px;width:120.5px">0.0001</div>
<div class="cell" style="left:1820px;width:120.5px">-0.00002</div>
<div class="cell" style="left:1946px;width:120.5px">38.12%</div>
<div class="cell" style="left:2072px;width:120.5px">0</div>
</div>
<div class="row" style="top:936px">
<div class="bg itm" style="left:1168px;width:1030px"></div>
<div class="cell" style="left:7px;width:119.5px">0</div>
<div class="cell" style="left:132px;width:120.5px">214</div>
<div class="cell" style="left:258px;width:120.5px">23.51%</div>
<div class="cell" style="left:384px;width:120.5px">0.0006</div>
<div class="cell" style="left:510px;width:120.5px">0.00</div>
<div class="pill" style="left:642px;width:122px">–</div>
<div class="pill" style="left:775px;width:122px">0.01</div>
<div class="cell" style="left:902px;width:128.5px">0.01</div>
<div class="cell ctr" style="left:1036px;width:132px">57.0000</div>
<div class="cell" style="left:1168px;width:128.5px">10.29</div>
<div class="pill" style="left:1308px;width:121px">9.65</div>
<div class="pill" style="left:1440px;width:122px">9.80</div>
<div class="cell" style="left:1567px;width:121.5px">-1.00</div>
<div class="cell" style="left:1694px;width:120.5px">0.0000</div>
<div class="cell" style="left:1820px;width:120.5px">-0.00001</div>
<div class="cell" style="left:1946px;width:120.5px">43.81%</div>
<div class="cell" style="left:2072px;width:120.5px">0</div>
</div>
<div class="row" style="top:964px">
<div class="bg itm" style="left:1168px;width:1030px"></div>
<div class="cell" style="left:7px;width:119.5px">0</div>
<div class="cell" style="left:132px;width:120.5px">207</div>
<div class="cell" style="left:258px;width:120.5px">25.42%</div>
<div class="cell" style="left:384px;width:120.5px">0.0003</div>
<div class="cell" style="left:510px;width:120.5px">0.00</div>
<div class="pill" style="left:642px;width:122px">–</div>
<div class="pill" style="left:775px;width:122px">0.01</div>
<div class="cell" style="left:902px;width:128.5px">0.00</div>
<div class="cell ctr" style="left:1036px;width:132px">58.0000</div>
<div class="cell" style="left:1168px;width:128.5px">11.29</div>
<div class="pill" style="left:1308px;width:121px">10.65</div>
<div class="pill" style="left:1440px;width:122px">10.80</div>
<div class="cell" style="left:1567px;width:121.5px">-1.00</div>
<div class="cell" style="left:1694px;width:120.5px">0.0000</div>
<div class="cell" style="left:1820px;width:120.5px">0.00000</div>
<div class="cell" style="left:1946px;width:120.5px">39.13%</div>
<div class="cell" style="left:2072px;width:120.5px">0</div>
</div>
<div class="row" style="top:992px">
<div class="bg itm" style="left:1168px;width:1030px"></div>
<div class="cell" style="left:7px;width:119.5px">0</div>
<div class="cell" style="left:132px;width:120.5px">19</div>
<div class="cell" style="left:258px;width:120.5px">27.34%</div>
<div class="cell" style="left:384px;width:120.5px">0.0001</div>
<div class="cell" style="left:510px;width:120.5px">0.00</div>
<div class="pill" style="left:642px;width:122px">–</div>
<div class="pill" style="left:775px;width:122px">0.01</div>
<div class="cell" style="left:902px;width:128.5px">0.00</div>
<div class="cell ctr" style="left:1036px;width:132px">59.0000</div>
<div class="cell" style="left:1168px;width:128.5px">12.29</div>
<div class="pill" style="left:1308px;width:121px">11.40</div>
<div class="pill" style="left:1440px;width:122px">11.80</div>
<div class="cell" style="left:1567px;width:121.5px">-1.00</div>
<div class="cell" style="left:1694px;width:120.5px">0.0000</div>
<div class="cell" style="left:1820px;width:120.5px">0.00000</div>
<div class="cell" style="left:1946px;width:120.5px">44.51%</div>
<div class="cell" style="left:2072px;width:120.5px">0</div>
</div>
<div class="row" style="top:1020px">
<div class="bg itm" style="left:1168px;width:1030px"></div>
<div class="cell" style="left:7px;width:119.5px">0</div>
<div class="cell" style="left:132px;width:120.5px">5</div>
<div class="cell" style="left:258px;width:120.5px">29.21%</div>
<div class="cell" style="left:384px;width:120.5px">0.0001</div>
<div class="cell" style="left:510px;width:120.5px">0.00</div>
<div class="pill" style="left:642px;width:122px">–</div>
<div class="pill" style="left:775px;width:122px">0.01</div>
<div class="cell" style="left:902px;width:128.5px">0.00</div>
<div class="cell ctr" style="left:1036px;width:132px">60.0000</div>
<div class="cell" style="left:1168px;width:128.5px">13.29</div>
<div class="pill" style="left:1308px;width:121px">12.65</div>
<div class="pill" style="left:1440px;width:122px">12.80</div>
<div class="cell" style="left:1567px;width:121.5px">-1.00</div>
<div class="cell" style="left:1694px;width:120.5px">0.0000</div>
<div class="cell" style="left:1820px;width:120.5px">0.00000</div>
<div class="cell" style="left:1946px;width:120.5px">53.18%</div>
<div class="cell" style="left:2072px;width:120.5px">0</div>
</div>
<div class="row" style="top:1048px">
<div class="bg itm" style="left:1168px;width:1030px"></div>
<div class="cell" style="left:7px;width:119.5px">0</div>
<div class="cell" style="left:132px;width:120.5px">4</div>
<div class="cell" style="left:258px;width:120.5px">31.04%</div>
<div class="cell" style="left:384px;width:120.5px">0.0000</div>
<div class="cell" style="left:510px;width:120.5px">0.00</div>
<div class="pill" style="left:642px;width:122px">–</div>
<div class="pill" style="left:775px;width:122px">0.01</div>
<div class="cell" style="left:902px;width:128.5px">0.00</div>
<div class="cell ctr" style="left:1036px;width:132px">61.0000</div>
<div class="cell" style="left:1168px;width:128.5px">14.29</div>
<div class="pill" style="left:1308px;width:121px">13.65</div>
<div class="pill" style="left:1440px;width:122px">13.80</div>
<div class="cell" style="left:1567px;width:121.5px">-1.00</div>
<div class="cell" style="left:1694px;width:120.5px">0.0000</div>
<div class="cell" style="left:1820px;width:120.5px">0.00000</div>
<div class="cell" style="left:1946px;width:120.5px">56.15%</div>
<div class="cell" style="left:2072px;width:120.5px">0</div>
</div>
<div class="row" style="top:1076px">
<div class="bg itm" style="left:1168px;width:1030px"></div>
<div class="cell" style="left:7px;width:119.5px">0</div>
<div class="cell" style="left:132px;width:120.5px">1</div>
<div class="cell" style="left:258px;width:120.5px">32.82%</div>
<div class="cell" style="left:384px;width:120.5px">0.0000</div>
<div class="cell" style="left:510px;width:120.5px">0.00</div>
<div class="pill" style="left:642px;width:122px">–</div>
<div class="pill" style="left:775px;width:122px">0.01</div>
<div class="cell" style="left:902px;width:128.5px">0.00</div>
<div class="cell ctr" style="left:1036px;width:132px">62.0000</div>
<div class="cell" style="left:1168px;width:128.5px">15.29</div>
<div class="pill" style="left:1308px;width:121px">14.60</div>
<div class="pill" style="left:1440px;width:122px">14.80</div>
<div class="cell" style="left:1567px;width:121.5px">-1.00</div>
<div class="cell" style="left:1694px;width:120.5px">0.0000</div>
<div class="cell" style="left:1820px;width:120.5px">0.00000</div>
<div class="cell" style="left:1946px;width:120.5px">58.72%</div>
<div class="cell" style="left:2072px;width:120.5px">0</div>
</div>
<div class="row" style="top:1104px">
<div class="bg itm" style="left:1168px;width:1030px"></div>
<div class="cell" style="left:7px;width:119.5px">0</div>
<div class="cell" style="left:132px;width:120.5px">0</div>
<div class="cell" style="left:258px;width:120.5px">34.68%</div>
<div class="cell" style="left:384px;width:120.5px">0.0000</div>
<div class="cell" style="left:510px;width:120.5px">0.00</div>
<div class="pill" style="left:642px;width:122px">–</div>
<div class="pill" style="left:775px;width:122px">0.01</div>
<div class="cell" style="left:902px;width:128.5px">0.00</div>
<div class="cell ctr" style="left:1036px;width:132px">63.0000</div>
<div class="cell" style="left:1168px;width:128.5px">16.29</div>
<div class="pill" style="left:1308px;width:121px">15.25</div>
<div class="pill" style="left:1440px;width:122px">15.85</div>
<div class="cell" style="left:1567px;width:121.5px">-1.00</div>
<div class="cell" style="left:1694px;width:120.5px">0.0000</div>
<div class="cell" style="left:1820px;width:120.5px">0.00000</div>
<div class="cell" style="left:1946px;width:120.5px">52.08%</div>
<div class="cell" style="left:2072px;width:120.5px">0</div>
</div>
<div class="row" style="top:1132px">
<div class="bg itm" style="left:1168px;width:1030px"></div>
<div class="cell" style="left:7px;width:119.5px">0</div>
<div class="cell" style="left:132px;width:120.5px">0</div>
<div class="cell" style="left:258px;width:120.5px">36.39%</div>
<div class="cell" style="left:384px;width:120.5px">0.0000</div>
<div class="cell" style="left:510px;width:120.5px">0.00</div>
<div class="pill" style="left:642px;width:122px">–</div>
<div class="pill" style="left:775px;width:122px">0.01</div>
<div class="cell" style="left:902px;width:128.5px">0.00</div>
<div class="cell ctr" style="left:1036px;width:132px">64.0000</div>
<div class="cell" style="left:1168px;width:128.5px">17.29</div>
<div class="pill" style="left:1308px;width:121px">16.40</div>
<div class="pill" style="left:1440px;width:122px">16.85</div>
<div class="cell" style="left:1567px;width:121.5px">-1.00</div>
<div class="cell" style="left:1694px;width:120.5px">0.0000</div>
<div class="cell" style="left:1820px;width:120.5px">0.00000</div>
<div class="cell" style="left:1946px;width:120.5px">60.06%</div>
<div class="cell" style="left:2072px;width:120.5px">0</div>
</div>
<div class="row" style="top:1160px">
<div class="bg itm" style="left:1168px;width:1030px"></div>
<div class="cell" style="left:7px;width:119.5px">0</div>
<div class="cell" style="left:132px;width:120.5px">0</div>
<div class="cell" style="left:258px;width:120.5px">38.06%</div>
<div class="cell" style="left:384px;width:120.5px">0.0000</div>
<div class="cell" style="left:510px;width:120.5px">0.00</div>
<div class="pill" style="left:642px;width:122px">–</div>
<div class="pill" style="left:775px;width:122px">0.01</div>
<div class="cell" style="left:902px;width:128.5px">0.00</div>
<div class="cell ctr" style="left:1036px;width:132px">65.0000</div>
<div class="cell" style="left:1168px;width:128.5px">18.29</div>
<div class="pill" style="left:1308px;width:121px">17.65</div>
<div class="pill" style="left:1440px;width:122px">17.80</div>
<div class="cell" style="left:1567px;width:121.5px">-1.00</div>
<div class="cell" style="left:1694px;width:120.5px">0.0000</div>
<div class="cell" style="left:1820px;width:120.5px">0.00000</div>
<div class="cell" style="left:1946px;width:120.5px">67.37%</div>
<div class="cell" style="left:2072px;width:120.5px">1</div>
</div>
<div class="sepline" style="top:292px"></div>
<div class="sepline" style="top:320px"></div>
<div class="sepline" style="top:348px"></div>
<div class="sepline" style="top:376px"></div>
<div class="sepline" style="top:404px"></div>
<div class="sepline" style="top:432px"></div>
<div class="sepline" style="top:460px"></div>
<div class="sepline" style="top:488px"></div>
<div class="sepline" style="top:516px"></div>
<div class="sepline" style="top:544px"></div>
<div class="sepline" style="top:572px"></div>
<div class="sepline" style="top:600px"></div>
<div class="sepline" style="top:628px"></div>
<div class="sepline" style="top:656px"></div>
<div class="abs" style="left:7px;top:684px;width:2191px;height:0;border-top:1px dashed #0035d2;"></div>
<div class="sepline" style="top:712px"></div>
<div class="sepline" style="top:740px"></div>
<div class="sepline" style="top:768px"></div>
<div class="sepline" style="top:796px"></div>
<div class="sepline" style="top:824px"></div>
<div class="sepline" style="top:852px"></div>
<div class="sepline" style="top:880px"></div>
<div class="sepline" style="top:908px"></div>
<div class="sepline" style="top:936px"></div>
<div class="sepline" style="top:964px"></div>
<div class="sepline" style="top:992px"></div>
<div class="sepline" style="top:1020px"></div>
<div class="sepline" style="top:1048px"></div>
<div class="sepline" style="top:1076px"></div>
<div class="sepline" style="top:1104px"></div>
<div class="sepline" style="top:1132px"></div>
<div class="sepline" style="top:1160px"></div>
<div class="sepline" style="top:1188px"></div>
<div class="abs" style="left:1036px;top:262px;width:1px;height:923px;background:#d3d6dd;"></div>
<div class="abs" style="left:1168px;top:262px;width:1px;height:923px;background:#d3d6dd;"></div>
<div class="abs" style="left:2201px;top:407px;width:7px;height:800px;border-radius:3.5px;background:#cdd1da;"></div>
<div class="abs" style="left:1036px;top:571px;width:1168px;height:30px;box-sizing:border-box;border:3px solid #ff0000;"></div>
<div class="abs" style="left:30px;top:738px;width:1139px;height:29px;box-sizing:border-box;border:3px solid #ff0000;"></div>
<div class="abs" style="left:2210px;top:31px;width:7px;height:1154px;background:#dcdcdc;"></div>
<div class="vsep" style="left:132px;top:264px;height:420px"></div>
<div class="vsep" style="left:258px;top:264px;height:420px"></div>
<div class="vsep" style="left:384px;top:264px;height:420px"></div>
<div class="vsep" style="left:510px;top:264px;height:420px"></div>
<div class="vsep" style="left:636px;top:264px;height:420px"></div>
<div class="vsep" style="left:769px;top:264px;height:420px"></div>
<div class="vsep" style="left:902px;top:264px;height:420px"></div>
<div class="vsep" style="left:1302px;top:684px;height:504px"></div>
<div class="vsep" style="left:1434px;top:684px;height:504px"></div>
<div class="vsep" style="left:1567px;top:684px;height:504px"></div>
<div class="vsep" style="left:1694px;top:684px;height:504px"></div>
<div class="vsep" style="left:1820px;top:684px;height:504px"></div>
<div class="vsep" style="left:1946px;top:684px;height:504px"></div>
<div class="vsep" style="left:2072px;top:684px;height:504px"></div>
</div>
</body></html>
